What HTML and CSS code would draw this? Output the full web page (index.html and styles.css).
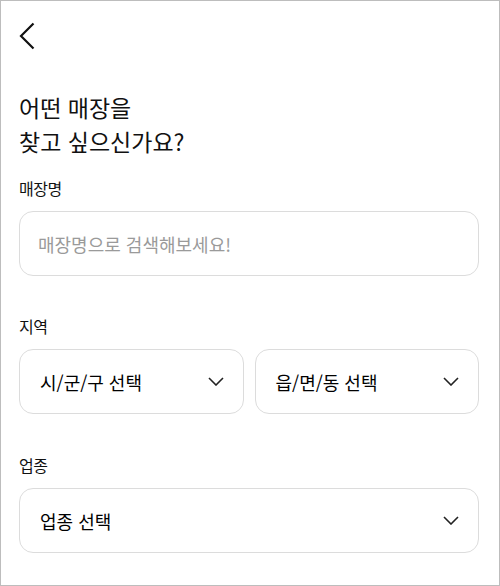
FILE: index.html
```html
<!DOCTYPE html>
<html lang="ko">
<head>
  <meta charset="UTF-8" />
  <meta name="viewport" content="width=device-width, initial-scale=1.0"/>
  <title>매장 찾기</title>
  <link rel="stylesheet" href="styles.css">
</head>
<body>
  <div class="screen">
    <button class="back" aria-label="뒤로">
      <svg width="16" height="28" viewBox="0 0 16 28"><path d="M14.5 1.5 L2 14 L14.5 26.5" fill="none" stroke="#111" stroke-width="2.2"/></svg>
    </button>

    <h1 class="title">어떤 매장을<br/>찾고 싶으신가요?</h1>

    <label class="label">매장명</label>
    <div class="field">
      <input class="search" type="text" placeholder="매장명으로 검색해보세요!"/>
    </div>

    <label class="label">지역</label>
    <div class="row">
      <div class="select">
        <span>시/군/구 선택</span>
        <svg class="chev" width="16" height="9" viewBox="0 0 16 9"><path d="M1 1 L8 8 L15 1" fill="none" stroke="#222" stroke-width="1.6"/></svg>
      </div>
      <div class="select">
        <span>읍/면/동 선택</span>
        <svg class="chev" width="16" height="9" viewBox="0 0 16 9"><path d="M1 1 L8 8 L15 1" fill="none" stroke="#222" stroke-width="1.6"/></svg>
      </div>
    </div>

    <label class="label">업종</label>
    <div class="select">
      <span>업종 선택</span>
      <svg class="chev" width="16" height="9" viewBox="0 0 16 9"><path d="M1 1 L8 8 L15 1" fill="none" stroke="#222" stroke-width="1.6"/></svg>
    </div>
  </div>
</body>
</html>
```

FILE: styles.css
```css
body {
  margin: 0;
  font-family: "Noto Sans CJK KR", "Noto Sans", sans-serif;
  color: #111;
  background: #fff;
}
.screen {
  box-sizing: border-box;
  height: 586px;
  border: 1px solid #bdbdbd;
  padding: 21px 20px 0 18px;
}
.back {
  display: block;
  border: none;
  background: none;
  padding: 0;
  margin: 0;
  width: 16px;
  height: 28px;
}
.back svg { display: block; }
.title {
  margin: 40px 0 0 0;
  font-size: 23px;
  font-weight: 400;
  line-height: 34px;
}
.label {
  display: block;
  font-size: 16px;
  letter-spacing: -0.5px;
  line-height: 20px;
  margin: 20px 0 0 0;
}
.field, .select {
  box-sizing: border-box;
  height: 65px;
  border: 1px solid #dcdcdc;
  border-radius: 14px;
  margin-top: 13px;
}
.search {
  box-sizing: border-box;
  width: 100%;
  height: 100%;
  border: none;
  background: transparent;
  outline: none;
  padding: 0 18px;
  font-family: inherit;
  font-size: 18px;
  color: #111;
}
.search::placeholder { color: #9a9a9a; }
.field + .label { margin-top: 40px; }
.row + .label { margin-top: 41px; }
.row {
  display: grid;
  grid-template-columns: 1fr 1fr;
  gap: 11px;
}
.select {
  display: flex;
  align-items: center;
  justify-content: space-between;
  padding: 0 19px 0 20px;
  font-size: 18px;
  font-weight: 400;
  color: #000;
}
.chev { display: block; }
```
